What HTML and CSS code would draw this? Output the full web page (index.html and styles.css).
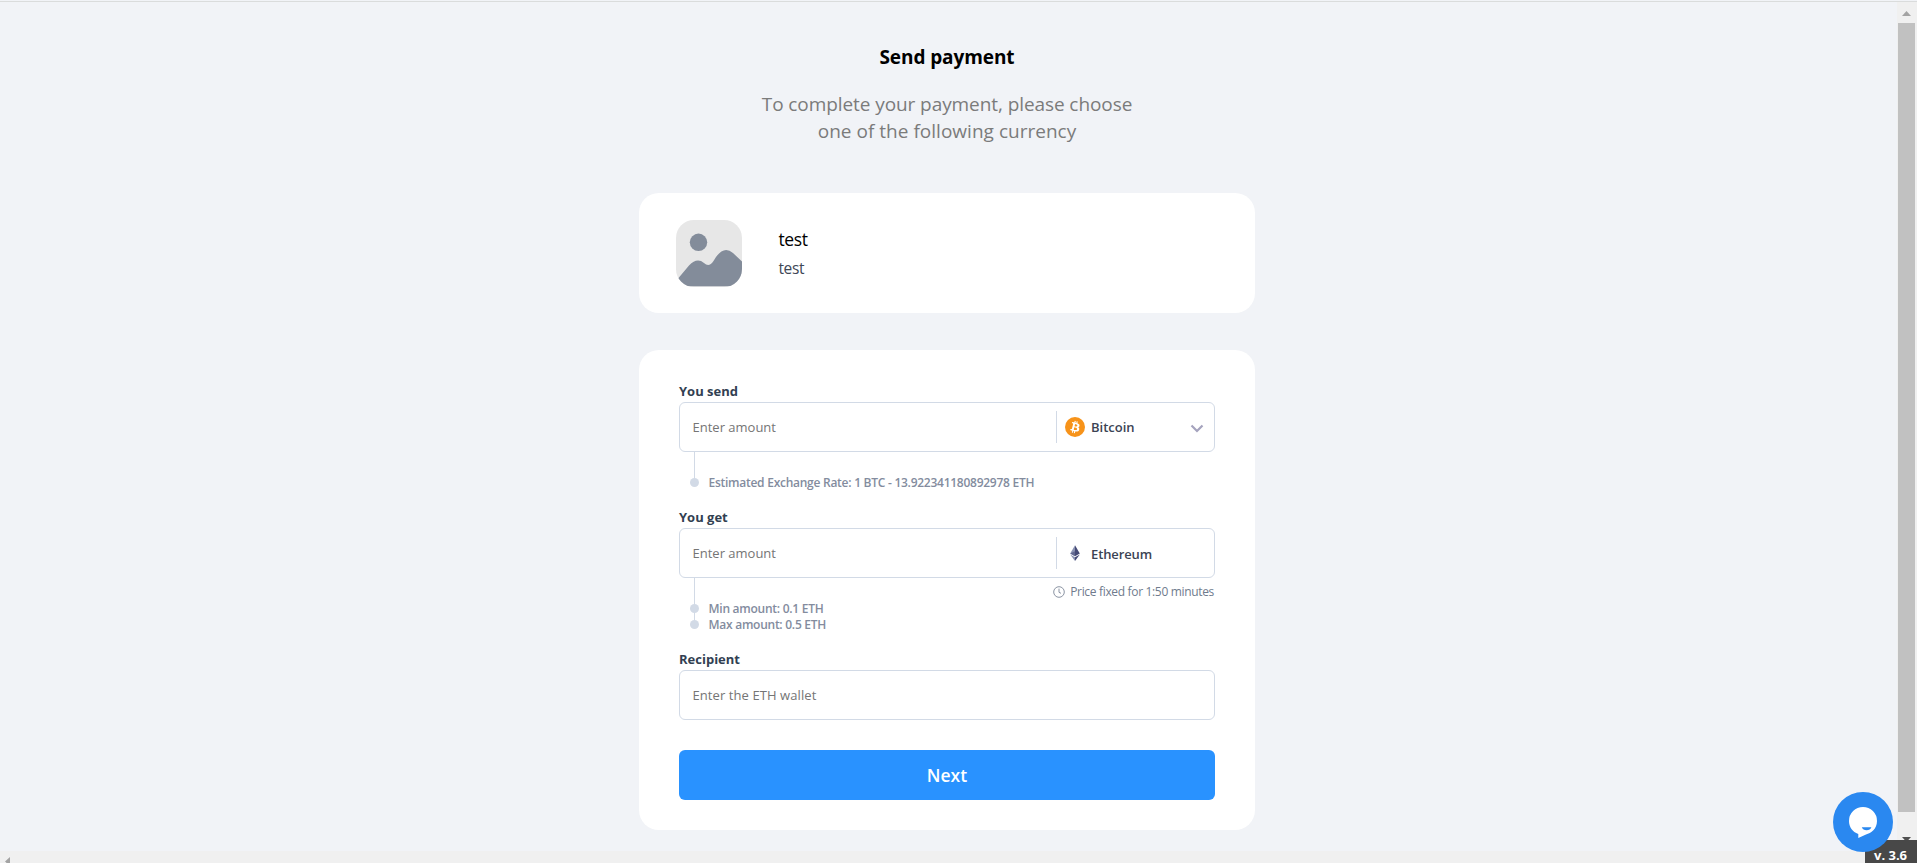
FILE: index.html
```html
<!DOCTYPE html>
<html lang="en">
<head>
<meta charset="utf-8">
<title>Send payment</title>
<link rel="stylesheet" href="styles.css">
</head>
<body>
<main class="page">
  <header class="intro">
    <h1 class="title">Send payment</h1>
    <p class="subtitle">To complete your payment, please choose<br><span class="second">one of the following currency</span></p>
  </header>
  <section class="card merchant">
    <svg class="avatar" viewBox="0 0 66 67">
      <clipPath id="round"><rect width="66" height="67" rx="18"/></clipPath>
      <g clip-path="url(#round)">
        <rect width="66" height="67" fill="#e7e7e7"/>
        <circle cx="22.5" cy="22.3" r="8.7" fill="#838c9a"/>
        <path d="M0 61 13 45.500Q21 37 28 43Q33 48 37.500 41Q47 24 57 33L66 41.500V66.300H0Z" fill="#838c9a"/>
      </g>
    </svg>
    <div class="merchant-text">
      <div class="name">test</div>
      <div class="about">test</div>
    </div>
  </section>
  <form class="card form">
    <label class="label">You send</label>
    <div class="field">
      <div class="value">Enter amount</div>
      <div class="currency">
        <svg class="coin" viewBox="0 0 32 32"><circle cx="16" cy="16" r="16" fill="#f7931a"/><path fill="#fff" d="M23.189 14.020c.314-2.096-1.283-3.223-3.465-3.975l.708-2.840-1.728-.43-.69 2.765c-.454-.114-.92-.22-1.385-.326l.695-2.783L15.596 6l-.708 2.839c-.376-.086-.746-.17-1.104-.26l.002-.009-2.384-.595-.46 1.846s1.283.294 1.256.312c.7.175.826.638.805 1.006l-.806 3.235c.048.012.11.030.18.057l-.183-.045-1.130 4.532c-.086.212-.303.531-.793.410.018.025-1.256-.313-1.256-.313l-.858 1.978 2.250.561c.418.105.828.215 1.231.318l-.715 2.872 1.727.43.708-2.840c.472.127.930.245 1.378.357l-.706 2.828 1.728.43.715-2.866c2.948.558 5.164.333 6.097-2.333.752-2.146-.037-3.385-1.588-4.192 1.130-.260 1.980-1.003 2.207-2.538zm-3.950 5.538c-.533 2.147-4.148.986-5.320.695l.950-3.805c1.172.293 4.929.872 4.370 3.110zm.535-5.569c-.487 1.953-3.495.960-4.470.717l.860-3.450c.975.243 4.118.696 3.610 2.733z"/></svg>
        <span>Bitcoin</span>
        <svg class="chevron" viewBox="0 0 14 9"><path d="M1.500 1.500 7 7l5.500-5.500" fill="none" stroke="#a5a3be" stroke-width="2.2"/></svg>
      </div>
    </div>
    <ul class="notes"><li>Estimated Exchange Rate: 1 BTC - 13.922341180892978 ETH</li></ul>
    <label class="label">You get</label>
    <div class="field">
      <div class="value">Enter amount</div>
      <div class="currency">
        <svg class="coin" viewBox="0 0 20 20"><path d="M10 2.300 5.200 10.500 10 13.200z" fill="#8a92b2"/><path d="M10 2.300 14.800 10.500 10 13.200z" fill="#454a75"/><path d="M5.200 10.500 10 8.300v4.900z" fill="#62688f"/><path d="M5.200 11.600 10 18v-3.700z" fill="#8a92b2"/><path d="M14.800 11.600 10 18v-3.700z" fill="#454a75"/></svg>
        <span class="eth">Ethereum</span>
      </div>
    </div>
    <div class="below">
      <ul class="notes pair"><li>Min amount: 0.1 ETH</li><li>Max amount: 0.5 ETH</li></ul>
      <div class="fixed"><svg class="clock" viewBox="0 0 12 12"><circle cx="6" cy="6" r="5.300"/><path d="M6 2.600V6.300L8 7.300"/></svg><span>Price fixed for 1:50 minutes</span></div>
    </div>
    <label class="label">Recipient</label>
    <div class="field"><div class="value wallet">Enter the ETH wallet</div></div>
    <button class="next" type="button">Next</button>
  </form>
</main>
<div class="topline"></div>
<div class="vscroll">
  <svg class="up" viewBox="0 0 9 5"><path d="M0 5 4.500 0 9 5z" fill="#a3a3a3"/></svg>
  <div class="thumb"></div>
  <svg class="down" viewBox="0 0 9 5"><path d="M0 0H9L4.500 5z" fill="#505050"/></svg>
</div>
<div class="hscroll"><svg class="left" viewBox="0 0 5 9"><path d="M5 0V9L0 4.500z" fill="#a3a3a3"/></svg></div>
<div class="version">v. 3.6</div>
<svg class="chat" viewBox="0 0 60 60">
  <circle cx="30" cy="30" r="30" fill="#2a88f0"/>
  <path d="M30 15a14 14 0 0 1 14 14c0 8-6 12-11 13.500L25.300 46V42C19.500 40 16 35 16 29a14 14 0 0 1 14-14z" fill="#fff"/>
  <path d="M28.800 35.200h9.600c-1 4-8.600 4-9.600 0z" fill="#2a88f0"/>
</svg>
</body>
</html>
```
FILE: styles.css
```css
* { box-sizing: border-box; }
body { margin: 0; height: 863px; overflow: hidden; background: #f1f3f7; font-family: "Open Sans", "Noto Sans", sans-serif; }
.page { width: 616px; margin-left: 639px; }
.intro { height: 193px; padding-top: 44px; text-align: center; }
.title { margin: 0; font-size: 19px; line-height: 27px; font-weight: 700; color: #000; letter-spacing: -0.08px; }
.subtitle { margin: 20px 0 0; font-size: 19px; line-height: 27px; color: #7b7b7b; letter-spacing: -0.08px; }
.second { letter-spacing: 0.02px; }
.card { background: #fff; border-radius: 20px; }
.merchant { height: 120px; padding: 27px 37px; display: flex; gap: 36.500px; }
.avatar { width: 66px; height: 67px; }
.name { font-size: 17.5px; line-height: 27px; padding-top: 6px; color: #000; letter-spacing: -0.4px; }
.about { font-size: 15.5px; line-height: 24px; padding-top: 3px; color: #3e4756; letter-spacing: -0.4px; }
.form { height: 480px; margin-top: 37px; padding: 32px 40px 30px; }
.label { display: block; height: 20px; font-size: 13px; font-weight: 700; line-height: 18px; color: #323f52; }
.field { height: 50px; border: 1px solid #d2dae6; border-radius: 6px; display: flex; align-items: center; padding-left: 12.500px; font-size: 13px; }
.value { flex: 1; color: #757575; }
.wallet { letter-spacing: 0.08px; }
.currency { width: 158px; height: 32px; border-left: 1px solid #d2dae6; display: flex; align-items: center; padding: 0 10px 0 8px; font-weight: 600; color: #3b4354; }
.coin { width: 20px; height: 20px; margin-right: 6px; }
.eth { padding-top: 2px; letter-spacing: -0.12px; }
.chevron { width: 14px; height: 9px; margin: 2px 0 0 auto; }
.notes { list-style: none; margin: 0; padding: 23px 0 0 29.500px; font-size: 12px; line-height: 16px; font-weight: 600; color: #838c9e; height: 56px; letter-spacing: -0.26px; }
.notes li { position: relative; }
/* bullet and the stem that joins it to the field or the bullet above */
.notes li::before { content: ""; position: absolute; left: -19px; top: 2.500px; width: 9px; height: 9px; border-radius: 50%; background: #d2dae6; }
.notes li::after { content: ""; position: absolute; left: -14.500px; bottom: 8px; width: 1px; height: 16px; background: #d2dae6; }
.notes li:first-child::after { height: 31px; }
.below { display: flex; justify-content: space-between; height: 72px; }
.fixed { font-size: 12px; letter-spacing: -0.33px; color: #6f7b8d; display: flex; align-items: center; gap: 5px; height: 27px; padding-right: 1px; }
.clock { width: 12px; height: 12px; fill: none; stroke: #8b94a3; }
.next { display: block; width: 100%; height: 50px; margin-top: 30px; padding: 0; border: 0; border-radius: 6px; background: #2992ff; color: #fff; font: 600 17.5px "Open Sans", sans-serif; }
.topline { position: absolute; left: 0; top: 1px; width: 100%; height: 1px; background: #dadcdc; }
.vscroll { position: absolute; right: 0; top: 2px; width: 20px; height: 861px; background: #f0f0f0; display: flex; flex-direction: column; align-items: center; padding-right: 2px; }
.up { width: 9px; height: 5px; margin: 9px 0 7px; }
.thumb { width: 17px; height: 789px; background: #c1c1c1; }
.down { width: 9px; height: 5px; margin-top: 25px; }
.hscroll { position: absolute; left: 0; bottom: 0; width: 1897px; height: 12px; background: #f0f0f0; overflow: hidden; padding: 6px 0 0 5px; }
.left { display: block; width: 5px; height: 9px; }
.version { position: absolute; right: 0; bottom: 0; width: 52px; height: 23px; padding: 8px 0 0 9px; background: #484848; color: #fff; font-size: 13px; line-height: 15px; font-weight: 700; white-space: nowrap; }
.chat { position: absolute; left: 1833px; top: 792px; width: 60px; height: 60px; }
```
